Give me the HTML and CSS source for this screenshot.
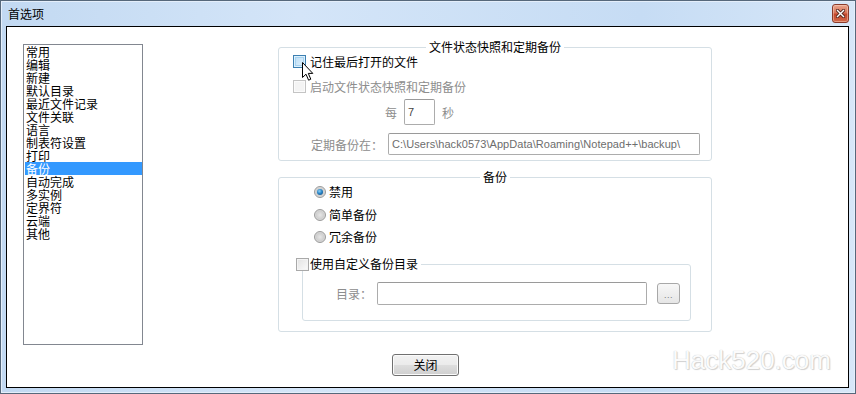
FILE: index.html
```html
<!DOCTYPE html>
<html lang="zh-CN">
<head>
<meta charset="utf-8">
<title>首选项</title>
<link rel="stylesheet" href="styles.css">
</head>
<body>
<div class="window">
  <div class="titlebar">
    <span class="title">首选项</span>
    <span class="close">
      <svg width="9" height="9" viewBox="0 0 9 9"><path d="M1.5 1.5 L7.5 7.5 M7.5 1.5 L1.5 7.5" stroke="#5a2a20" stroke-width="3.2" stroke-linecap="square"/><path d="M1.5 1.5 L7.5 7.5 M7.5 1.5 L1.5 7.5" stroke="#ffffff" stroke-width="1.4" stroke-linecap="square"/></svg>
    </span>
  </div>
  <div class="client">
    <div class="main">
      <ul class="catlist">
        <li>常用</li>
        <li>编辑</li>
        <li>新建</li>
        <li>默认目录</li>
        <li>最近文件记录</li>
        <li>文件关联</li>
        <li>语言</li>
        <li>制表符设置</li>
        <li>打印</li>
        <li class="selected">备份</li>
        <li>自动完成</li>
        <li>多实例</li>
        <li>定界符</li>
        <li>云端</li>
        <li>其他</li>
      </ul>
      <div class="panel">
        <fieldset class="group g1">
          <legend>文件状态快照和定期备份</legend>
          <div class="row r1"><span class="cb cb-hover"></span><span class="lbl-cb">记住最后打开的文件</span></div>
          <div class="row r2 disabled"><span class="cb cb-dis"></span><span class="lbl-cb">启动文件状态快照和定期备份</span></div>
          <div class="row r3 disabled"><span>每</span><span class="input num">7</span><span class="sec">秒</span></div>
          <div class="row r4 disabled"><span class="plabel">定期备份在：</span><span class="input path">C:\Users\hack0573\AppData\Roaming\Notepad++\backup\</span></div>
        </fieldset>
        <fieldset class="group g2">
          <legend>备份</legend>
          <div class="row rad rad1"><span class="radio on"></span><span>禁用</span></div>
          <div class="row rad rad2"><span class="radio"></span><span>简单备份</span></div>
          <div class="row rad rad3"><span class="radio"></span><span>冗余备份</span></div>
          <fieldset class="subgroup">
            <legend><span class="cb cb-plain"></span><span class="lbl-sub">使用自定义备份目录</span></legend>
            <div class="row dirrow disabled"><span class="dlabel">目录：</span><span class="input dir"></span><span class="dots">...</span></div>
          </fieldset>
        </fieldset>
      </div>
    </div>
    <div class="footer"><span class="btn">关闭</span></div>
    <div class="watermark">Hack520.com</div>
    <svg class="cursor" width="12" height="19" viewBox="0 0 12 19"><path d="M0.5 0.5 L0.5 15.5 L4 12.2 L6.6 18.2 L8.8 17.2 L6.3 11.4 L10.8 11.4 Z" fill="#ffffff" stroke="#000000" stroke-width="1" stroke-linejoin="miter"/></svg>
  </div>
</div>
</body>
</html>
```
FILE: styles.css
```css
* { box-sizing: border-box; }
html, body { margin: 0; padding: 0; background: #ffffff; }
body {
  font-family: "Noto Sans CJK SC", "Noto Sans", sans-serif;
  font-size: 12px;
  color: #000;
}
.window {
  width: 856px;
  height: 394px;
  border: 1px solid #56687b;
  background: linear-gradient(90deg, #c2d9f2 0%, #d4e5f8 35%, #c6dcf4 75%, #d7e7f8 100%);
  display: flex;
  flex-direction: column;
  box-shadow: inset 0 0 0 1px #e4eefa;
}
.titlebar {
  height: 25px;
  display: flex;
  align-items: center;
  padding-left: 7px;
  flex: none;
}
.title { line-height: 14px; color: #000; }
.close {
  margin-left: auto;
  margin-right: 6px;
  align-self: flex-start;
  margin-top: 3px;
  width: 17px;
  height: 19px;
  border: 1px solid #8a3b2b;
  border-radius: 3px;
  background: linear-gradient(#eaa58d 0%, #d8755a 45%, #c4472c 55%, #d2694a 100%);
  box-shadow: inset 0 0 0 1px rgba(255,220,200,0.45);
  display: flex;
  align-items: center;
  justify-content: center;
}
.close svg { display: block; }
.client {
  position: relative;
  flex: 1;
  margin: 0 6px 5px 5px;
  background: #ffffff;
  border: 1px solid #000;
}
.main {
  display: flex;
  align-items: flex-start;
}
.catlist {
  list-style: none;
  margin: 17px 0 0 16px;
  padding: 0;
  width: 120px;
  height: 301px;
  border: 1px solid #828790;
  flex: none;
}
.catlist li {
  height: 13px;
  line-height: 13px;
  margin-left: 1px;
  padding-left: 1px;
  white-space: nowrap;
}
.catlist li.selected {
  background: #3399ff;
  color: #ffffff;
}
.panel {
  margin-left: 135px;
  padding-top: 13px;
  width: 434px;
  flex: none;
}
fieldset { min-width: 0; }
.group {
  width: 434px;
  margin: 0;
  padding: 0;
  border: 1px solid #d5dfe5;
  border-radius: 3px;
}
.group > legend {
  margin: 0 auto;
  padding: 0 3px;
  height: 14px;
  line-height: 14px;
}
.row {
  display: flex;
  align-items: center;
  white-space: nowrap;
}
.disabled { color: #8d8d8d; }
.g1 { padding-bottom: 5px; }
.r1 { margin-top: 1px; height: 13px; padding-left: 14px; }
.r2 { margin-top: 12px; height: 13px; padding-left: 14px; }
.lbl-cb { margin-left: 4px; line-height: 13px; }
.r3 { margin-top: 6px; height: 26px; padding-left: 106px; }
.r4 { margin-top: 8px; height: 22px; padding-left: 32px; }
.input {
  display: flex;
  align-items: center;
  background: #fff;
  border: 1px solid #acacac;
  border-top-color: #9a9a9a;
  border-radius: 2px;
}
.num {
  width: 31px;
  height: 26px;
  margin-left: 7px;
  padding-left: 3px;
  color: #444;
  font-family: "Liberation Sans", sans-serif;
  font-size: 11px;
}
.sec { margin-left: 7px; }
.plabel { width: 77px; }
.path {
  width: 312px;
  height: 22px;
  padding-left: 3px;
  color: #6d6d6d;
  font-family: "Liberation Sans", sans-serif;
  font-size: 11px;
  letter-spacing: 0.05px;
}
.cb {
  display: inline-block;
  width: 13px;
  height: 13px;
  flex: none;
}
.cb-hover {
  border: 1px solid #3c7fb1;
  background: linear-gradient(135deg, #b9dcf5, #e3f3fd);
  box-shadow: inset 0 0 0 1px #def1fc, inset 0 0 0 2px #a7d2f0;
}
.cb-dis {
  border: 1px solid #c4c4c4;
  background: #f4f4f4;
  box-shadow: inset 0 0 0 1px #fbfbfb;
}
.cb-plain {
  border: 1px solid #a9a9a9;
  background: linear-gradient(135deg, #e2e2e2, #fbfbfb);
  box-shadow: inset 0 0 0 1px #f4f4f4;
}
.g2 { margin-top: 9px; padding-bottom: 10px; }
.rad { height: 13px; padding-left: 35px; }
.rad1 { margin-top: 1px; }
.rad2 { margin-top: 10px; }
.rad3 { margin-top: 9px; }
.radio {
  width: 12px;
  height: 12px;
  border-radius: 50%;
  border: 1px solid #9a9a9a;
  background: radial-gradient(circle at 50% 50%, #e6e6e6 0%, #cfcfcf 55%, #f1f1f1 100%);
  margin-right: 3px;
  flex: none;
  display: flex;
  align-items: center;
  justify-content: center;
}
.radio.on::after {
  content: "";
  width: 6px;
  height: 6px;
  border-radius: 50%;
  background: radial-gradient(circle at 40% 35%, #8fd0f5 0%, #2a86c8 45%, #0b3f73 100%);
}
.subgroup {
  margin: 14px 0 0 23px;
  width: 389px;
  padding: 0 0 15px 0;
  border: 1px solid #d5dfe5;
  border-radius: 3px;
}
.subgroup > legend {
  margin-left: -7px;
  padding: 0 3px 0 0;
  height: 14px;
  line-height: 14px;
  display: flex;
  align-items: center;
}
.lbl-sub { margin-left: 1px; }
.dirrow { margin-top: 11px; height: 23px; padding-left: 33px; }
.dlabel { width: 41px; }
.dir { width: 270px; height: 23px; }
.dots {
  margin-left: 10px;
  width: 23px;
  height: 21px;
  border: 1px solid #a8a8a8;
  border-radius: 3px;
  background: linear-gradient(#f7f7f7, #e6e6e6);
  color: #7a7a7a;
  font-family: "Liberation Sans", sans-serif;
  font-size: 9px;
  display: flex;
  align-items: center;
  justify-content: center;
  padding-top: 3px;
  letter-spacing: 0.5px;
}
.footer {
  margin-top: 9px;
  padding-left: 385px;
  display: flex;
}
.btn {
  width: 67px;
  height: 22px;
  border: 1px solid #707070;
  border-radius: 3px;
  background: linear-gradient(#f2f2f2 0%, #ebebeb 48%, #dddddd 52%, #cfcfcf 100%);
  box-shadow: inset 0 0 0 1px #fbfbfb;
  display: flex;
  align-items: center;
  justify-content: center;
  line-height: 14px;
}
.watermark {
  position: absolute;
  left: 665px;
  top: 320px;
  font-family: "Liberation Sans", sans-serif;
  font-size: 26px;
  line-height: 26px;
  color: #fbfbfb;
  text-shadow: 0 0 1px #b8b8b8, 1px 1px 1px #d4d4d4;
  white-space: nowrap;
}
.cursor {
  position: absolute;
  left: 295px;
  top: 35px;
}
```
